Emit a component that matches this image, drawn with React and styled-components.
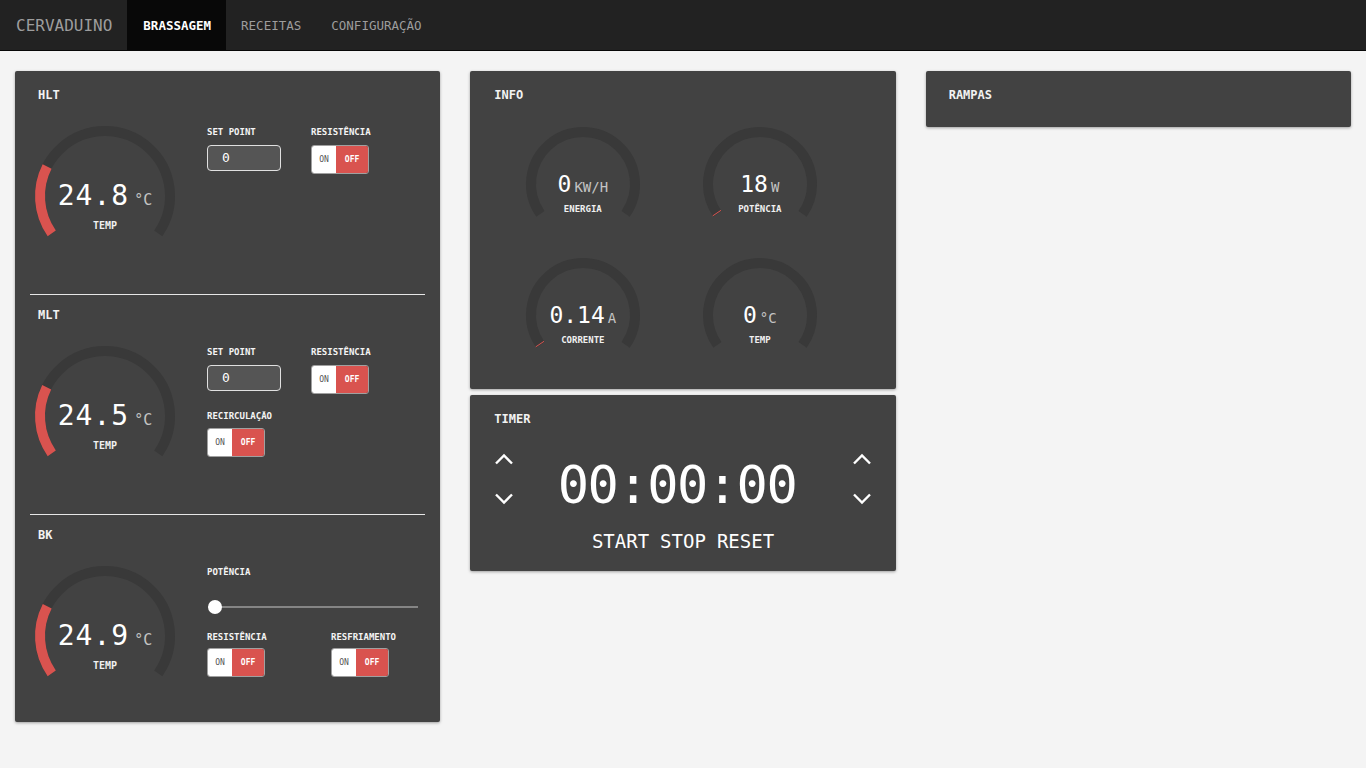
import React from "react"
import styled, { createGlobalStyle } from "styled-components"

const GlobalStyle = createGlobalStyle`
  html, body {
    margin: 0;
    padding: 0;
    background: #f4f4f4;
    font-family: "DejaVu Sans Mono", "Liberation Mono", monospace;
  }
  * { box-sizing: border-box; }
`

const RED = "#d9534f"
const TRACK = "#393939"

const Navbar = styled.header`
  display: flex;
  align-items: stretch;
  height: 51px;
  background: #222;
  border-bottom: 1px solid #080808;
`

const Brand = styled.div`
  display: flex;
  align-items: center;
  padding: 0 15px 0 16px;
  font-size: 16px;
  color: #9d9d9d;
`

const NavItem = styled.div`
  display: flex;
  align-items: center;
  padding: 0 15px 0 ${p => (p.active ? 16 : 15)}px;
  font-size: 12.5px;
  font-weight: ${p => (p.active ? 700 : 400)};
  color: ${p => (p.active ? "#fff" : "#9d9d9d")};
  background: ${p => (p.active ? "#080808" : "transparent")};
`

const Main = styled.main`
  display: grid;
  grid-template-columns: repeat(3, 1fr);
  gap: 30px;
  align-items: start;
  padding: 20px 15px;
`

const Column = styled.div`
  display: flex;
  flex-direction: column;
  gap: 6px;
`

const Card = styled.section`
  background: #424242;
  border-radius: 2px;
  box-shadow: 0 1px 3px rgba(0, 0, 0, 0.35);
  color: #fff;
  padding: ${p => p.pad || "16px 24px"};
`

const Title = styled.h2`
  margin: 0 0 0 ${p => p.indent ?? 0}px;
  font-size: 12px;
  line-height: 16px;
  font-weight: 700;
  color: #f2f2f2;
`

const Tank = styled.div`
  padding: 12px 0 23px;
  border-top: ${p => (p.first ? "none" : "1px solid #e6e6e6")};
  &:last-child {
    padding-bottom: 11px;
  }
`

const TankBody = styled.div`
  display: grid;
  grid-template-columns: 177px 1fr;
  margin-top: 18px;
`

const Controls = styled.div`
  display: flex;
  flex-direction: column;
  padding-top: 5px;
`

const FieldRow = styled.div`
  display: flex;
  gap: ${p => p.gap ?? 30}px;
  margin-top: ${p => p.top ?? 0}px;
`

const Field = styled.div`
  display: flex;
  flex-direction: column;
  width: ${p => (p.w ? p.w + "px" : "auto")};
`

const Label = styled.div`
  font-size: 9px;
  line-height: 12px;
  font-weight: 700;
  color: #f4f4f4;
  margin-bottom: ${p => p.mb ?? 8}px;
`

const Input = styled.div`
  width: 74px;
  height: 26px;
  border: 1px solid #e0e0e0;
  border-radius: 4px;
  background: #555;
  color: #fff;
  font-size: 13px;
  line-height: 24px;
  padding-left: 14px;
`

const Switch = styled.div`
  display: flex;
  width: 58px;
  height: 29px;
  border: 1px solid #a0a0a0;
  border-radius: 3px;
  overflow: hidden;
`

const SwitchPart = styled.span`
  display: flex;
  align-items: center;
  justify-content: center;
  width: ${p => (p.on ? 25 : 33)}px;
  font-size: 8px;
  font-weight: ${p => (p.on ? 400 : 700)};
  background: ${p => (p.on ? "#fff" : RED)};
  color: ${p => (p.on ? "#555" : "#fff")};
`

const Slider = styled.div`
  position: relative;
  width: 210px;
  height: 14px;
  margin: 22px 0 17px 1px;
  display: flex;
  align-items: center;
`

const SliderTrack = styled.div`
  width: 100%;
  height: 2px;
  background: #858585;
`

const SliderThumb = styled.div`
  position: absolute;
  left: 0;
  top: 0;
  width: 14px;
  height: 14px;
  border-radius: 50%;
  background: #fff;
`

const GaugeBox = styled.div`
  position: relative;
  width: ${p => p.size}px;
  height: ${p => p.size}px;
  justify-self: ${p => p.align || "start"};
`

const Readout = styled.div`
  position: absolute;
  left: 0;
  right: 0;
  top: ${p => p.top}px;
  display: flex;
  flex-direction: column;
  align-items: center;
`

const ValueLine = styled.div`
  display: flex;
  align-items: baseline;
  gap: ${p => p.gap ?? 4}px;
  line-height: ${p => p.lh}px;
`

const Value = styled.span`
  font-size: ${p => p.fs}px;
  color: #fff;
  letter-spacing: ${p => p.ls ?? 0}px;
`

const Unit = styled.span`
  font-size: ${p => p.fs}px;
  color: #c4c4c4;
`

const GaugeLabel = styled.div`
  font-size: ${p => p.fs ?? 10}px;
  line-height: 12px;
  font-weight: 700;
  color: #f0f0f0;
  margin-top: ${p => p.mt}px;
`

const InfoGrid = styled.div`
  display: grid;
  grid-template-columns: 177px 177px;
  row-gap: 11px;
  margin-top: 21px;
`

const TimerRow = styled.div`
  display: flex;
  justify-content: space-between;
  align-items: flex-start;
  margin-top: 24px;
`

const Arrows = styled.div`
  display: flex;
  flex-direction: column;
  gap: 28px;
  padding-top: 2px;
`

const ArrowButton = styled.button`
  display: flex;
  background: none;
  border: none;
  padding: 0;
  cursor: pointer;
`

const Clock = styled.div`
  font-size: 52px;
  line-height: 56px;
  margin: 6px 12px 0 0;
  color: #fff;
  letter-spacing: -1.5px;
`

const TimerButtons = styled.div`
  display: flex;
  justify-content: center;
  gap: 11px;
  margin-top: 17px;
`

const TextButton = styled.button`
  background: none;
  border: none;
  padding: 0;
  font-family: inherit;
  font-size: 19px;
  line-height: 22px;
  color: #fff;
  cursor: pointer;
`

const pt = (c, r, a) => {
  const rad = (a * Math.PI) / 180
  return [c + r * Math.sin(rad), c - r * Math.cos(rad)]
}

const arc = (c, r, a0, a1) => {
  const [x0, y0] = pt(c, r, a0)
  const [x1, y1] = pt(c, r, a1)
  const large = a1 - a0 > 180 ? 1 : 0
  return `M ${x0} ${y0} A ${r} ${r} 0 ${large} 1 ${x1} ${y1}`
}

const Gauge = ({ size, r, fraction, align, children }) => {
  const c = size / 2
  const start = -125
  const end = 125
  const fill = start + (end - start) * fraction
  const [ix, iy] = pt(c, r - 5, start + 1)
  const [ox, oy] = pt(c, r + 5, start + 1)
  return (
    <GaugeBox size={size} align={align}>
      <svg width={size} height={size}>
        <path d={arc(c, r, start, end)} stroke={TRACK} strokeWidth="10" fill="none" />
        {fraction >= 0.02 && (
          <path d={arc(c, r, start, fill)} stroke={RED} strokeWidth="10" fill="none" />
        )}
        {fraction > 0 && fraction < 0.02 && (
          <line x1={ix} y1={iy} x2={ox} y2={oy} stroke={RED} strokeWidth="1" />
        )}
      </svg>
      {children}
    </GaugeBox>
  )
}

const TankGauge = ({ value, fraction }) => (
  <Gauge size={150} r={65} fraction={fraction}>
    <Readout top={60}>
      <ValueLine lh={30} gap={5}>
        <Value fs={28} ls={1}>{value}</Value>
        <Unit fs={15}>°C</Unit>
      </ValueLine>
      <GaugeLabel mt={5}>TEMP</GaugeLabel>
    </Readout>
  </Gauge>
)

const InfoGauge = ({ value, unit, label, fraction }) => (
  <Gauge size={120} r={52} fraction={fraction} align="center">
    <Readout top={46}>
      <ValueLine lh={28} gap={3}>
        <Value fs={23}>{value}</Value>
        <Unit fs={14}>{unit}</Unit>
      </ValueLine>
      <GaugeLabel fs={9} mt={2}>{label}</GaugeLabel>
    </Readout>
  </Gauge>
)

const OnOff = () => (
  <Switch>
    <SwitchPart on>ON</SwitchPart>
    <SwitchPart>OFF</SwitchPart>
  </Switch>
)

const Chevron = ({ up }) => (
  <svg width="20" height="12" viewBox="0 0 20 12">
    <polyline
      points={up ? "2,10.5 10,2.5 18,10.5" : "2,1.5 10,9.5 18,1.5"}
      fill="none"
      stroke="#fff"
      strokeWidth="2.4"
    />
  </svg>
)

const SetPointRow = () => (
  <FieldRow>
    <Field w={74}>
      <Label mb={7}>SET POINT</Label>
      <Input>0</Input>
    </Field>
    <Field>
      <Label mb={7}>RESISTÊNCIA</Label>
      <OnOff />
    </Field>
  </FieldRow>
)

const Arrowset = () => (
  <Arrows>
    <ArrowButton><Chevron up /></ArrowButton>
    <ArrowButton><Chevron /></ArrowButton>
  </Arrows>
)

export default function App() {
  return (
    <>
      <GlobalStyle />
      <Navbar>
        <Brand>CERVADUINO</Brand>
        <NavItem active>BRASSAGEM</NavItem>
        <NavItem>RECEITAS</NavItem>
        <NavItem>CONFIGURAÇÃO</NavItem>
      </Navbar>
      <Main>
        <Column>
          <Card pad="4px 15px 0">
            <Tank first>
              <Title indent={8}>HLT</Title>
              <TankBody>
                <TankGauge value="24.8" fraction={0.248} />
                <Controls>
                  <SetPointRow />
                </Controls>
              </TankBody>
            </Tank>
            <Tank>
              <Title indent={8}>MLT</Title>
              <TankBody>
                <TankGauge value="24.5" fraction={0.245} />
                <Controls>
                  <SetPointRow />
                  <FieldRow top={16}>
                    <Field>
                      <Label mb={6}>RECIRCULAÇÃO</Label>
                      <OnOff />
                    </Field>
                  </FieldRow>
                </Controls>
              </TankBody>
            </Tank>
            <Tank>
              <Title indent={8}>BK</Title>
              <TankBody>
                <TankGauge value="24.9" fraction={0.249} />
                <Controls>
                  <Label mb={0}>POTÊNCIA</Label>
                  <Slider>
                    <SliderTrack />
                    <SliderThumb />
                  </Slider>
                  <FieldRow gap={0}>
                    <Field w={124}>
                      <Label mb={5}>RESISTÊNCIA</Label>
                      <OnOff />
                    </Field>
                    <Field>
                      <Label mb={5}>RESFRIAMENTO</Label>
                      <OnOff />
                    </Field>
                  </FieldRow>
                </Controls>
              </TankBody>
            </Tank>
          </Card>
        </Column>

        <Column>
          <Card pad="16px 24px 14px">
            <Title>INFO</Title>
            <InfoGrid>
              <InfoGauge value="0" unit="KW/H" label="ENERGIA" fraction={0} />
              <InfoGauge value="18" unit="W" label="POTÊNCIA" fraction={0.006} />
              <InfoGauge value="0.14" unit="A" label="CORRENTE" fraction={0.006} />
              <InfoGauge value="0" unit="°C" label="TEMP" fraction={0} />
            </InfoGrid>
          </Card>
          <Card pad="16px 24px 19px">
            <Title>TIMER</Title>
            <TimerRow>
              <Arrowset />
              <Clock>00:00:00</Clock>
              <Arrowset />
            </TimerRow>
            <TimerButtons>
              <TextButton>START</TextButton>
              <TextButton>STOP</TextButton>
              <TextButton>RESET</TextButton>
            </TimerButtons>
          </Card>
        </Column>

        <Column>
          <Card pad="16px 24px 24px 23px">
            <Title>RAMPAS</Title>
          </Card>
        </Column>
      </Main>
    </>
  )
}
